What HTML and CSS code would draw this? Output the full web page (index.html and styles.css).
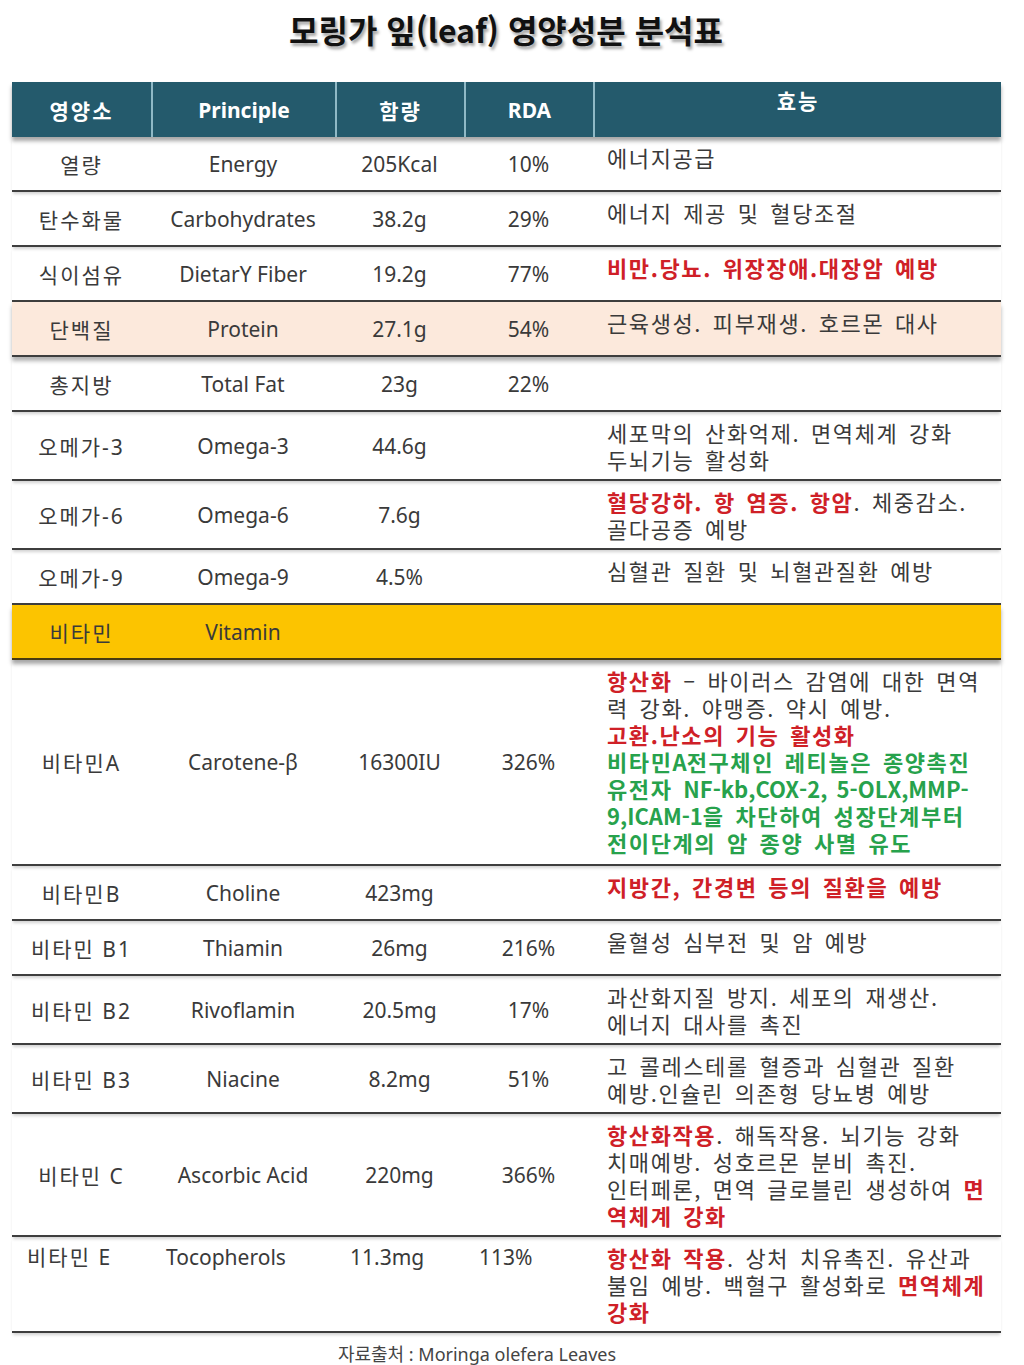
FILE: index.html
```html
<!DOCTYPE html>
<html lang="ko">
<head>
<meta charset="utf-8">
<title>모링가 잎(leaf) 영양성분 분석표</title>
<link rel="stylesheet" href="styles.css">
</head>
<body>
<div class="page">
  <h1 class="title">모링가 잎(leaf) 영양성분 분석표</h1>
  <div class="table">
    <div class="row head">
      <div class="c ko">영양소</div>
      <div class="c">Principle</div>
      <div class="c ko">함량</div>
      <div class="c">RDA</div>
      <div class="c ko top">효능</div>
    </div>
    <div class="row">
      <div class="c ko">열량</div><div class="c">Energy</div><div class="c">205Kcal</div><div class="c">10%</div>
      <div class="eff">에너지공급</div>
    </div>
    <div class="row">
      <div class="c ko">탄수화물</div><div class="c">Carbohydrates</div><div class="c">38.2g</div><div class="c">29%</div>
      <div class="eff">에너지 제공 및 혈당조절</div>
    </div>
    <div class="row">
      <div class="c ko">식이섬유</div><div class="c">DietarY Fiber</div><div class="c">19.2g</div><div class="c">77%</div>
      <div class="eff"><span class="red">비만.당뇨. 위장장애.대장암 예방</span></div>
    </div>
    <div class="row peach">
      <div class="c ko">단백질</div><div class="c">Protein</div><div class="c">27.1g</div><div class="c">54%</div>
      <div class="eff">근육생성. 피부재생. 호르몬 대사</div>
    </div>
    <div class="row">
      <div class="c ko">총지방</div><div class="c">Total Fat</div><div class="c">23g</div><div class="c">22%</div>
      <div class="eff"></div>
    </div>
    <div class="row">
      <div class="c ko">오메가-3</div><div class="c">Omega-3</div><div class="c">44.6g</div><div class="c"></div>
      <div class="eff">세포막의 산화억제. 면역체계 강화<br>두뇌기능 활성화</div>
    </div>
    <div class="row">
      <div class="c ko">오메가-6</div><div class="c">Omega-6</div><div class="c">7.6g</div><div class="c"></div>
      <div class="eff"><span class="red">혈당강하. 항 염증. 항암</span>. 체중감소.<br>골다공증 예방</div>
    </div>
    <div class="row">
      <div class="c ko">오메가-9</div><div class="c">Omega-9</div><div class="c">4.5%</div><div class="c"></div>
      <div class="eff">심혈관 질환 및 뇌혈관질환 예방</div>
    </div>
    <div class="row yellow">
      <div class="c ko">비타민</div><div class="c">Vitamin</div><div class="c"></div><div class="c"></div>
      <div class="eff"></div>
    </div>
    <div class="row">
      <div class="c ko">비타민A</div><div class="c">Carotene-β</div><div class="c">16300IU</div><div class="c">326%</div>
      <div class="eff tall"><span class="red">항산화</span> – 바이러스 감염에 대한 면역<br>력 강화. 야맹증. 약시 예방.<br><span class="red">고환.난소의 기능 활성화</span><br><span class="green">비타민<span class="lat">A</span>전구체인 레티놀은 종양촉진<br>유전자 <span class="lat">NF-kb,COX-2, 5-OLX,MMP-</span><br><span class="lat">9,ICAM-1</span>을 차단하여 성장단계부터<br>전이단계의 암 종양 사멸 유도</span></div>
    </div>
    <div class="row">
      <div class="c ko">비타민B</div><div class="c">Choline</div><div class="c">423mg</div><div class="c"></div>
      <div class="eff"><span class="red">지방간, 간경변 등의 질환을 예방</span></div>
    </div>
    <div class="row">
      <div class="c ko">비타민 B1</div><div class="c">Thiamin</div><div class="c">26mg</div><div class="c">216%</div>
      <div class="eff">울혈성 심부전 및 암 예방</div>
    </div>
    <div class="row">
      <div class="c ko">비타민 B2</div><div class="c">Rivoflamin</div><div class="c">20.5mg</div><div class="c">17%</div>
      <div class="eff">과산화지질 방지. 세포의 재생산.<br>에너지 대사를 촉진</div>
    </div>
    <div class="row">
      <div class="c ko">비타민 B3</div><div class="c">Niacine</div><div class="c">8.2mg</div><div class="c">51%</div>
      <div class="eff">고 콜레스테롤 혈증과 심혈관 질환<br>예방.인슐린 의존형 당뇨병 예방</div>
    </div>
    <div class="row">
      <div class="c ko">비타민 C</div><div class="c">Ascorbic Acid</div><div class="c">220mg</div><div class="c">366%</div>
      <div class="eff"><span class="red">항산화작용</span>. 해독작용. 뇌기능 강화<br>치매예방. 성호르몬 분비 촉진.<br>인터페론, 면역 글로블린 생성하여 <span class="red">면<br>역체계 강화</span></div>
    </div>
    <div class="row left">
      <div class="c ko">비타민 E</div><div class="c">Tocopherols</div><div class="c">11.3mg</div><div class="c">113%</div>
      <div class="eff"><span class="red">항산화 작용</span>. 상처 치유촉진. 유산과<br>불임 예방. 백혈구 활성화로 <span class="red">면역체계</span><br><span class="red">강화</span></div>
    </div>
  </div>
  <p class="source">자료출처 : Moringa olefera Leaves</p>
</div>
</body>
</html>
```

FILE: styles.css
```css
* { box-sizing: content-box; }
html, body { margin: 0; padding: 0; background: #ffffff; }
body {
  font-family: "Noto Sans", "Noto Sans CJK KR", sans-serif;
  color: #3a3a3a;
}
.page { width: 1024px; }
.title {
  margin: 0;
  padding-top: 9px;
  height: 43px;
  line-height: 40px;
  text-align: center;
  font-family: "Noto Sans CJK KR", sans-serif;
  font-weight: 700;
  font-size: 32px;
  color: #111;
  text-shadow: 2px 3px 3px rgba(0,0,0,0.35);
  padding-right: 12px;
}
.table {
  margin: 30px 0 0 12px;
  width: 989px;
}
.row {
  display: grid;
  grid-template-columns: 139px 184px 129px 129px 1fr;
  min-height: 53px;
  border-bottom: 2px solid #3e3e3e;
  box-shadow: 0 3px 3px -1px rgba(0,0,0,0.18);
  font-size: 21px;
}
.c {
  display: flex;
  align-items: center;
  justify-content: center;
  white-space: nowrap;
}
.c.ko { letter-spacing: 2px; }
.eff {
  padding: 7px 0 6px 14px;
  line-height: 27px;
  font-family: "Noto Sans CJK KR", sans-serif;
  font-size: 22px;
  letter-spacing: 1.6px;
  word-spacing: 3px;
  white-space: nowrap;
}
.eff.tall { padding-bottom: 8px; }
.lat { letter-spacing: 0; }
.red { color: #cf2027; font-weight: 700; }
.green { color: #27a24c; font-weight: 700; }
.head {
  min-height: 55px;
  background: #245a6c;
  color: #ffffff;
  font-weight: 700;
  border-bottom: none;
  box-shadow: 0 4px 4px rgba(0,0,0,0.35);
}
.head .c + .c { border-left: 2px solid #8fb9c6; }
.head .c { font-size: 21px; }
.head .top { align-items: flex-start; padding-top: 3px; }
.peach { background: #fce9dc; box-shadow: 0 4px 4px rgba(0,0,0,0.3); }
.yellow {
  background: #fcc400;
  border-bottom: 2px solid #4a3b10;
  box-shadow: 0 4px 4px rgba(0,0,0,0.35);
}
.left .c {
  align-items: flex-start;
  justify-content: flex-start;
  padding: 7px 0 0 15px;
  line-height: 27px;
}
.source {
  margin: 9px 0 0;
  line-height: 24px;
  text-align: center;
  font-size: 18px;
  color: #444;
  padding-right: 70px;
}
```
